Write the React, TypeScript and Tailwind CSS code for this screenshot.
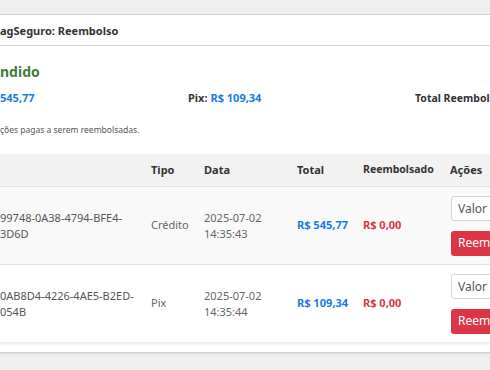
export default function App() {
  const rows = [
    { id: ['99748-0A38-4794-BFE4-', '3D6D'], tipo: 'Crédito', data: ['2025-07-02', '14:35:43'], total: 'R$ 545,77', bg: 'bg-[#f9f9f9]' },
    { id: ['0AB8D4-4226-4AE5-B2ED-', '054B'], tipo: 'Pix', data: ['2025-07-02', '14:35:44'], total: 'R$ 109,34', bg: 'bg-white' },
  ]
  const cols = 'grid grid-cols-[151px_53px_93px_66px_87px_1fr]'

  return (
    <div className="w-[490px] h-[370px] overflow-hidden bg-[#efefef] font-['Noto_Sans',sans-serif] text-[#333]">
      <div className="mt-[14px] h-[339px] bg-white border-y border-[#d0d0d0] shadow-[0_1px_2px_rgba(0,0,0,0.08)]">
        {/* cabeçalho */}
        <div className="h-[31px] border-b border-[#d4d4d4] flex items-center">
          <h2 className="text-[11px] font-bold leading-none whitespace-nowrap">agSeguro: Reembolso</h2>
        </div>

        <div className="pt-[16px]">
          <h3 className="text-[14px] font-bold leading-[20px] text-[#437a3d]">ndido</h3>

          <div className="mt-[8px] grid grid-cols-[188px_227px_1fr] text-[11px] font-bold leading-[16px] whitespace-nowrap">
            <span className="text-[#1a7ae8]">545,77</span>
            <span>Pix: <span className="text-[#1a7ae8]">R$ 109,34</span></span>
            <span className="text-[10.5px]">Total Reembolsado: <span className="text-[#dc3545]">R$ 0,00</span></span>
          </div>

          <p className="mt-[18px] text-[8.5px] leading-[12px] text-[#555] whitespace-nowrap">ções pagas a serem reembolsadas.</p>

          {/* tabela */}
          <div className="mt-[18px] text-[11px]">
            <div className={`${cols} h-[32px] items-center bg-[#f2f2f2] font-bold whitespace-nowrap`}>
              <span></span>
              <span>Tipo</span>
              <span>Data</span>
              <span>Total</span>
              <span className="text-[10.5px]">Reembolsado</span>
              <span>Ações</span>
            </div>
            {rows.map((r, i) => (
              <div key={i} className={`${cols} h-[78px] items-center border-t border-[#e2e2e2] ${r.bg} ${i === 1 ? 'shadow-[0_2px_3px_rgba(0,0,0,0.1)]' : ''}`}>
                <div className="leading-[16px] text-[#555] whitespace-nowrap">
                  <div>{r.id[0]}</div>
                  <div>{r.id[1]}</div>
                </div>
                <span className="text-[#666]">{r.tipo}</span>
                <div className="leading-[16px] text-[#666] whitespace-nowrap">
                  <div>{r.data[0]}</div>
                  <div>{r.data[1]}</div>
                </div>
                <span className="font-bold text-[#1a7ae8] whitespace-nowrap">{r.total}</span>
                <span className="font-bold text-[#dc3545] whitespace-nowrap">R$ 0,00</span>
                <div className="flex flex-col gap-[10px] pl-px">
                  <input
                    placeholder="Valor"
                    className="w-[120px] h-[25px] px-[6px] text-[12px] bg-white border border-[#d6d6d6] rounded-[3px] placeholder:text-[#555] outline-none"
                  />
                  <button className="w-[90px] h-[25px] px-[7px] text-left text-[12px] text-white bg-[#dc3545] rounded-[3px] whitespace-nowrap">Reembolsar</button>
                </div>
              </div>
            ))}
          </div>
        </div>
      </div>
    </div>
  )
}
